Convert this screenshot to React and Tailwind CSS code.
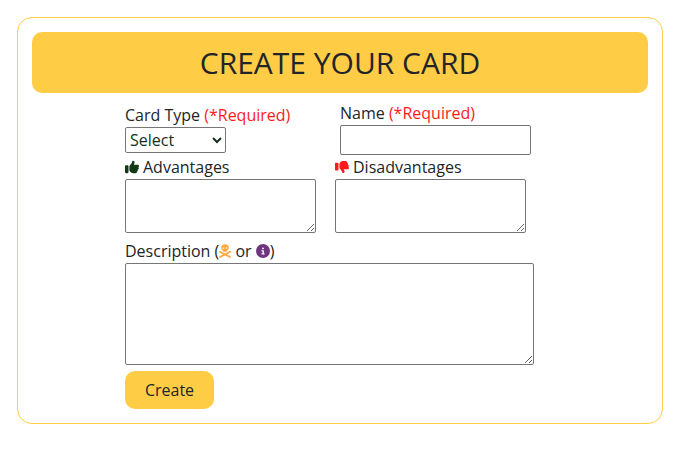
import { FaThumbsUp, FaThumbsDown, FaSkullCrossbones, FaCircleInfo } from "react-icons/fa6";

const field = "block rounded-[2px] border border-[#767676] bg-white outline-none";

function Required() {
  return <span className="text-[#ff1a1a]">(*Required)</span>;
}

export default function App() {
  return (
    <div className="h-[452px] w-[682px] bg-white pt-[17px] pl-[17px] font-['Open_Sans',sans-serif] text-base leading-6 font-normal text-[#212529]">
      <div className="h-[407px] w-[646px] rounded-[15px] border border-[#ffcc45] p-[14px]">
        <h1 className="h-[61px] rounded-[10px] bg-[#ffcc45] pt-[13px] text-center text-[30px] leading-9 font-normal">
          CREATE YOUR CARD
        </h1>
        <form className="ml-[93px] w-[409px]">
          <div className="flex h-[62px]">
            <div className="w-[215px] pt-[10px]">
              <label className="block">
                Card Type <Required />
              </label>
              <select className={`${field} h-[26px] w-[101px] text-[#14301c]`}>
                <option>Select</option>
              </select>
            </div>
            <div className="pt-2">
              <label className="block">
                Name <Required />
              </label>
              <input className={`${field} h-[30px] w-[191px]`} />
            </div>
          </div>
          <div className="flex gap-[19px]">
            <div>
              <label className="flex h-6 items-center gap-1">
                <FaThumbsUp className="size-[14px] text-[#123816]" />
                Advantages
              </label>
              <textarea className={`${field} h-[54px] w-[191px] resize`} />
            </div>
            <div>
              <label className="flex h-6 items-center gap-1">
                <FaThumbsDown className="size-[14px] text-[#ff1a1a]" />
                Disadvantages
              </label>
              <textarea className={`${field} h-[54px] w-[191px] resize`} />
            </div>
          </div>
          <label className="mt-[6px] flex h-6 items-center whitespace-pre">
            Description (
            <FaSkullCrossbones className="h-[14px] w-[12px] text-[#ffa63c]" />
            {" or "}
            <FaCircleInfo className="size-[14px] text-[#6f3680]" />)
          </label>
          <textarea className={`${field} h-[102px] w-[409px] resize`} />
          <button type="button" className="mt-[6px] block h-[38px] w-[89px] rounded-[10px] bg-[#ffcc45] text-[#212529]">
            Create
          </button>
        </form>
      </div>
    </div>
  );
}
